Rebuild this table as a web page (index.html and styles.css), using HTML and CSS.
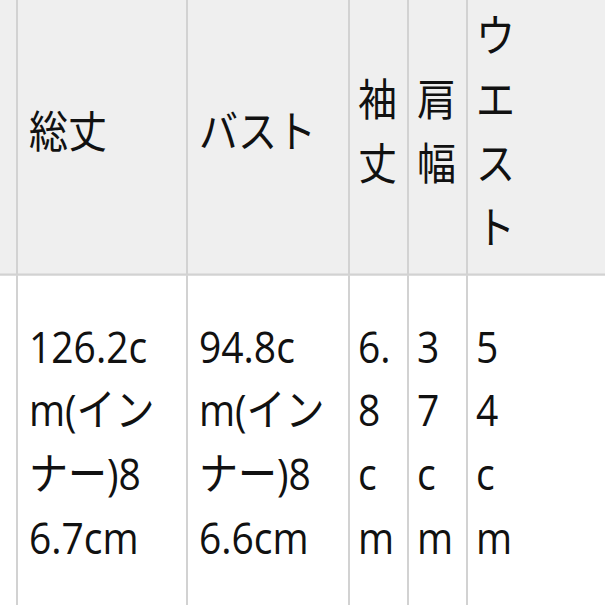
FILE: index.html
```html
<!DOCTYPE html>
<html lang="ja">
<head>
<meta charset="utf-8">
<link rel="stylesheet" href="styles.css">
</head>
<body>
<table class="size-table">
  <colgroup>
    <col class="c-edge">
    <col class="c-wide1">
    <col class="c-wide2">
    <col class="c-narrow">
    <col class="c-narrow">
    <col class="c-last">
  </colgroup>
  <thead>
    <tr class="head-row">
      <th></th>
      <th><div class="cell-wide">総丈</div></th>
      <th><div class="cell-wide">バスト</div></th>
      <th><div class="cell-narrow">袖丈</div></th>
      <th><div class="cell-narrow">肩幅</div></th>
      <th><div class="cell-narrow">ウエスト</div></th>
    </tr>
  </thead>
  <tbody>
    <tr class="body-row">
      <td></td>
      <td><div class="cell-wide">126.2cm(インナー)86.7cm</div></td>
      <td><div class="cell-wide">94.8cm(インナー)86.6cm</div></td>
      <td><div class="cell-narrow">6.8cm</div></td>
      <td><div class="cell-narrow">37cm</div></td>
      <td><div class="cell-narrow">54cm</div></td>
    </tr>
  </tbody>
</table>
</body>
</html>
```
FILE: styles.css
```css
html, body {
  margin: 0;
  padding: 0;
  background: #ffffff;
}
body {
  width: 605px;
  height: 605px;
  overflow: hidden;
}
.size-table {
  border-collapse: collapse;
  table-layout: fixed;
  width: 640px;
  font-family: "Open Sans", "Noto Sans CJK JP", sans-serif;
  font-size: 39px;
  line-height: 56.5px;
  color: #111111;
  transform: scaleY(1.13);
  transform-origin: 0 0;
}
.c-edge { width: 17px; }
.c-wide1 { width: 170px; }
.c-wide2 { width: 162px; }
.c-narrow { width: 59px; }
.c-last { width: 173px; }
.size-table th,
.size-table td {
  border: 2px solid #d2d2d2;
  padding: 0 0 0 11px;
  text-align: left;
  vertical-align: middle;
  font-weight: normal;
  word-break: break-all;
}
.size-table th:first-child,
.size-table td:first-child {
  border-left: none;
  padding: 0;
}
.size-table th:last-child,
.size-table td:last-child {
  border-right: none;
}
.head-row th {
  background: #efefef;
  border-top: none;
  height: 232.5px;
  padding-bottom: 9px;
}
.body-row td {
  background: #ffffff;
  height: 294px;
}
.cell-wide {
  width: 128px;
}
.cell-narrow {
  width: 34px;
  margin-left: -3px;
}
```
